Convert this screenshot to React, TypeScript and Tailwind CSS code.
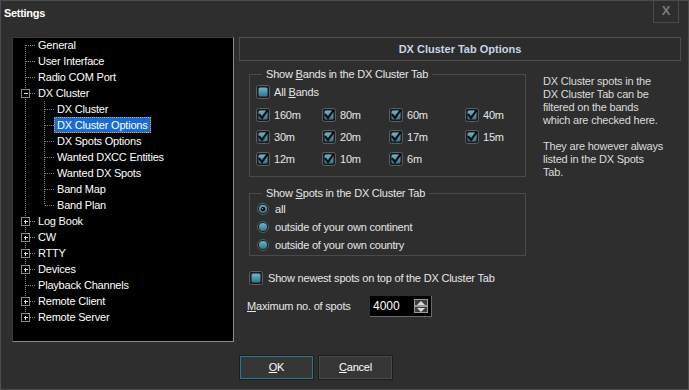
import { useId } from 'react';

const font = { fontFamily: '"Liberation Sans", Arial, sans-serif' };

type Seg = 'full' | 'top' | 'bottom' | 'none';

interface TreeItem {
  label: string;
  level: 0 | 1;
  main: Seg;
  child?: Seg;
  box?: 'plus' | 'minus';
  selected?: boolean;
}

const tree: TreeItem[] = [
  { label: 'General', level: 0, main: 'bottom' },
  { label: 'User Interface', level: 0, main: 'full' },
  { label: 'Radio COM Port', level: 0, main: 'full' },
  { label: 'DX Cluster', level: 0, main: 'full', box: 'minus' },
  { label: 'DX Cluster', level: 1, main: 'full', child: 'full' },
  { label: 'DX Cluster Options', level: 1, main: 'full', child: 'full', selected: true },
  { label: 'DX Spots Options', level: 1, main: 'full', child: 'full' },
  { label: 'Wanted DXCC Entities', level: 1, main: 'full', child: 'full' },
  { label: 'Wanted DX Spots', level: 1, main: 'full', child: 'full' },
  { label: 'Band Map', level: 1, main: 'full', child: 'full' },
  { label: 'Band Plan', level: 1, main: 'full', child: 'top' },
  { label: 'Log Book', level: 0, main: 'full', box: 'plus' },
  { label: 'CW', level: 0, main: 'full', box: 'plus' },
  { label: 'RTTY', level: 0, main: 'full', box: 'plus' },
  { label: 'Devices', level: 0, main: 'full', box: 'plus' },
  { label: 'Playback Channels', level: 0, main: 'full' },
  { label: 'Remote Client', level: 0, main: 'full', box: 'plus' },
  { label: 'Remote Server', level: 0, main: 'top', box: 'plus' },
];

const bands = ['160m', '80m', '60m', '40m', '30m', '20m', '17m', '15m', '12m', '10m', '6m'];

const vLine = (x: number, seg: Seg) => {
  if (seg === 'none') return null;
  const y1 = seg === 'bottom' ? 8 : 0;
  const y2 = seg === 'top' ? 8 : 16;
  return <line x1={x} y1={y1} x2={x} y2={y2} stroke="#8a8a8a" strokeDasharray="1 1" />;
};

const TreeRow = ({ item }: { item: TreeItem }) => {
  const indent = item.level === 0 ? 21 : 40;
  return (
    <div className="flex h-[16px] items-center">
      <svg width={indent} height={16} className="shrink-0" shapeRendering="crispEdges">
        {vLine(11.5, item.main)}
        {item.level === 1 && item.child && vLine(30.5, item.child)}
        {item.level === 0 && !item.box && (
          <line x1={12} y1={8.5} x2={21} y2={8.5} stroke="#8a8a8a" strokeDasharray="1 1" />
        )}
        {item.level === 0 && item.box && (
          <>
            <line x1={16} y1={8.5} x2={21} y2={8.5} stroke="#8a8a8a" strokeDasharray="1 1" />
            <rect x={7.5} y={4.5} width={8} height={8} fill="#000" stroke="#8a8a8a" />
            <line x1={9.5} y1={8.5} x2={14} y2={8.5} stroke="#e0e0e0" />
            {item.box === 'plus' && <line x1={11.5} y1={6.5} x2={11.5} y2={11} stroke="#e0e0e0" />}
          </>
        )}
        {item.level === 1 && (
          <line x1={31} y1={8.5} x2={40} y2={8.5} stroke="#8a8a8a" strokeDasharray="1 1" />
        )}
      </svg>
      <span
        className={`h-[16px] px-[2px] leading-[14px] whitespace-nowrap border ${
          item.selected ? 'bg-[#1a6ad4] border-dotted border-[#f0a040]' : 'border-transparent'
        }`}
      >
        {item.label}
      </span>
    </div>
  );
};

const CheckBox = ({ checked }: { checked: boolean }) => {
  const id = useId();
  return (
    <svg width={14} height={14} className="shrink-0">
      <defs>
        <linearGradient id={id} x1="0" y1="0" x2="0" y2="1">
          <stop offset="0" stopColor="#6fb5c9" />
          <stop offset="1" stopColor="#2a7890" />
        </linearGradient>
      </defs>
      <rect x={0.5} y={0.5} width={13} height={13} rx={2} fill="#1b1b1b" stroke="#5e5e5e" />
      <rect x={2.5} y={2.5} width={9} height={9} rx={1.5} fill={`url(#${id})`} />
      {checked && (
        <path d="M3.5 7 L6 10 L11 3" fill="none" stroke="#0c0c0c" strokeWidth={2.2} strokeLinecap="square" />
      )}
    </svg>
  );
};

const Radio = ({ checked }: { checked: boolean }) => {
  const id = useId();
  return (
    <svg width={12} height={12} className="shrink-0">
      <defs>
        <linearGradient id={id} x1="0" y1="0" x2="0" y2="1">
          <stop offset="0" stopColor="#6fb5c9" />
          <stop offset="1" stopColor="#2a7890" />
        </linearGradient>
      </defs>
      <circle cx={6} cy={6} r={5.5} fill="#1b1b1b" stroke="#5e5e5e" />
      <circle cx={6} cy={6} r={4} fill={`url(#${id})`} />
      {checked && (
        <>
          <circle cx={6} cy={6} r={2.3} fill="#080808" />
          <circle cx={5.5} cy={5.5} r={0.7} fill="#9ad" />
        </>
      )}
    </svg>
  );
};

const Spin = ({ up }: { up: boolean }) => (
  <div className="w-[14px] h-[7px] border border-[#9a9a9a] bg-[#3c3c3c] flex items-center justify-center">
    <svg width={8} height={4}>
      <path d={up ? 'M0 4 L4 0 L8 4 Z' : 'M0 0 L4 4 L8 0 Z'} fill="#d8d8d8" />
    </svg>
  </div>
);

export default function App() {
  return (
    <div
      style={font}
      className="w-[689px] h-[390px] bg-[#2e2e2e] border border-[#4c4c4c] text-[11px] tracking-[-0.2px] text-[#e6e6e6] flex flex-col overflow-hidden"
    >
      {/* title bar */}
      <div className="h-[22px] flex items-center justify-between shrink-0">
        <span className="pl-[3px] pt-[2px] font-bold text-[11px] tracking-[-0.3px] text-white">Settings</span>
        <div className="w-[26px] h-[22px] -mt-[1px] mr-[9px] border border-[#4a4a4a] border-t-0 flex items-center justify-center text-[13px] font-bold text-[#7a7a7a]">
          X
        </div>
      </div>

      <div className="flex mt-[14px] pl-[11px] gap-[5px] shrink-0">
        {/* tree */}
        <div className="w-[222px] h-[305px] bg-black border-t border-l border-[#3a3a3a] border-r border-b border-r-[#8a8a8a] border-b-[#8a8a8a] pl-[1px] text-white">
          <div className="-mt-[1px]">
            {tree.map((item, i) => (
              <TreeRow key={i} item={item} />
            ))}
          </div>
        </div>

        {/* right panel */}
        <div className="w-[442px] flex flex-col">
          <div className="h-[24px] border border-[#4e4e4e] bg-[#2c2c2c] flex items-center justify-center font-bold text-[11px] tracking-normal text-[#c6d6e6]">
            DX Cluster Tab Options
          </div>

          <div className="flex pl-[10px] mt-[6px]">
            <div className="w-[277px] flex flex-col">
              <fieldset className="border border-[#4a4a4a] pl-[6px] pt-[4px] pb-[10px]">
                <legend className="ml-[6px] px-[4px] leading-[14px]">
                  Show <u>B</u>ands in the DX Cluster Tab
                </legend>
                <div className="flex items-center gap-[4px] h-[14px]">
                  <CheckBox checked={false} />
                  <span>
                    All <u>B</u>ands
                  </span>
                </div>
                <div className="grid grid-cols-[66px_67px_76px_auto] gap-y-[8px] mt-[9px]">
                  {bands.map((b) => (
                    <div key={b} className="flex items-center gap-[4px] h-[14px]">
                      <CheckBox checked />
                      <span>{b}</span>
                    </div>
                  ))}
                </div>
              </fieldset>

              <fieldset className="border border-[#4a4a4a] mt-[9px] pl-[7px] pb-[1px]">
                <legend className="ml-[5px] px-[4px] leading-[14px]">
                  Show <u>S</u>pots in the DX Cluster Tab
                </legend>
                {['all', 'outside of your own continent', 'outside of your own country'].map((r, i) => (
                  <div key={r} className="flex items-center gap-[6px] h-[18px]">
                    <Radio checked={i === 0} />
                    <span>{r}</span>
                  </div>
                ))}
              </fieldset>

              <div className="flex items-center gap-[5px] h-[14px] mt-[15px]">
                <CheckBox checked={false} />
                <span>Show newest spots on top of the DX Cluster Tab</span>
              </div>

              <div className="flex items-center mt-[11px] -ml-[2px]">
                <span className="w-[123px]">
                  <u>M</u>aximum no. of spots
                </span>
                <div className="w-[62px] h-[21px] bg-black border-r border-b border-[#6a6a6a] flex items-center pl-[3px] pr-[3px]">
                  <span className="flex-1 text-[12px] tracking-normal text-white">4000</span>
                  <div className="flex flex-col">
                    <Spin up />
                    <Spin up={false} />
                  </div>
                </div>
              </div>
            </div>

            <div className="ml-[17px] mt-[8px] leading-[13px] text-[#dcdcdc]">
              DX Cluster spots in the
              <br />
              DX Cluster Tab can be
              <br />
              filtered on the bands
              <br />
              which are checked here.
              <br />
              <br />
              They are however always
              <br />
              listed in the DX Spots
              <br />
              Tab.
            </div>
          </div>
        </div>
      </div>

      {/* buttons */}
      <div className="flex gap-[4px] pl-[238px] mt-[13px]">
        <button className="w-[75px] h-[25px] border border-[#1c1c1c] bg-[#363636] shadow-[inset_0_0_0_1px_#2f7590] text-white">
          <u>O</u>K
        </button>
        <button className="w-[75px] h-[25px] border border-[#1c1c1c] bg-[#363636] shadow-[inset_0_0_0_1px_#4a4a4a] text-white">
          <u>C</u>ancel
        </button>
      </div>
    </div>
  );
}
